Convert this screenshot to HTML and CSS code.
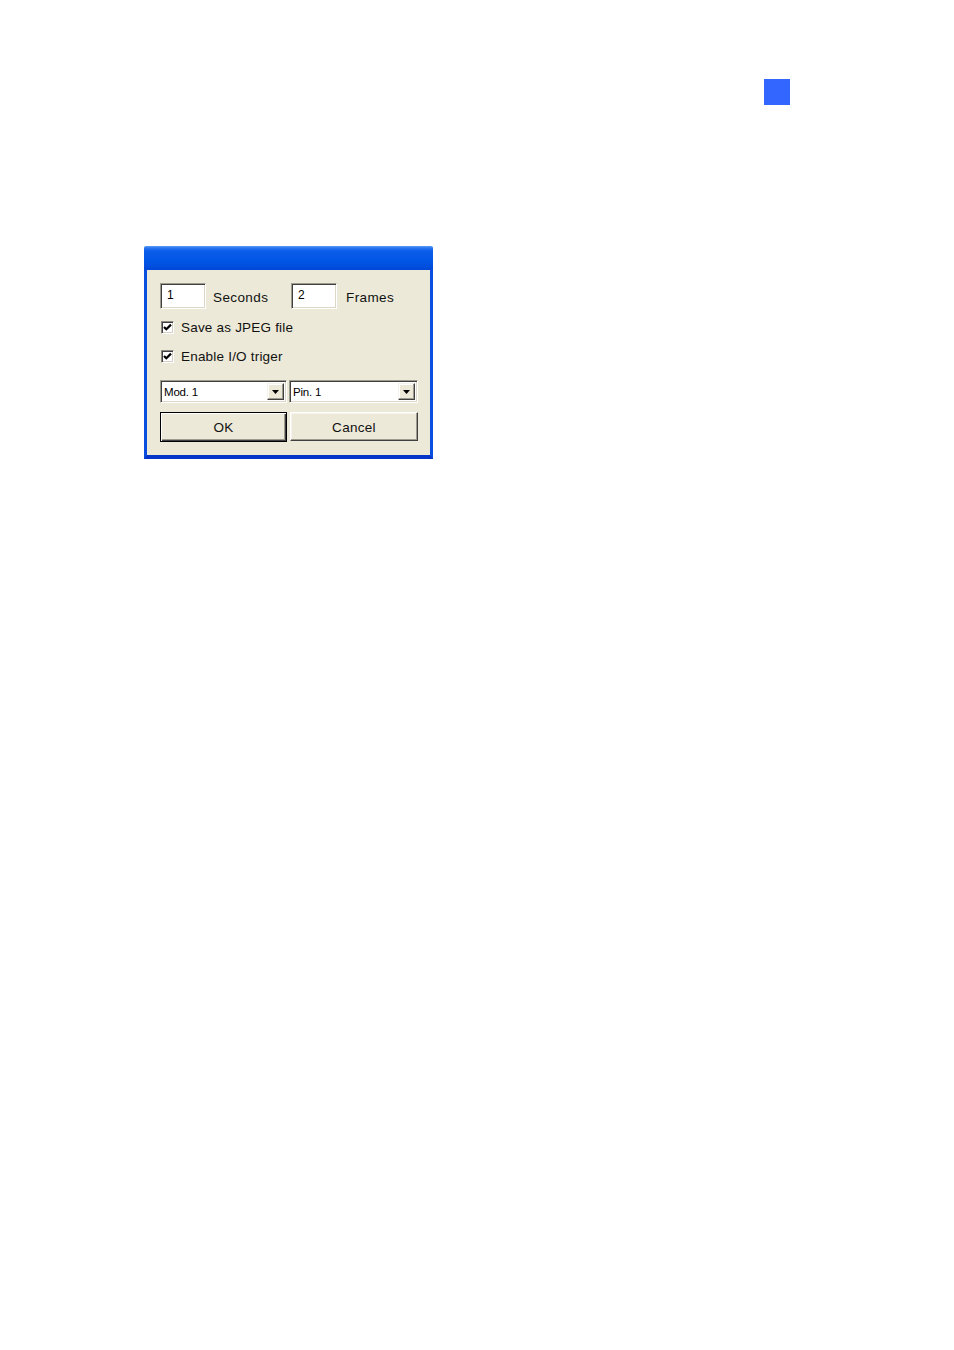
FILE: index.html
```html
<!DOCTYPE html>
<html>
<head>
<meta charset="utf-8">
<link rel="stylesheet" href="styles.css">
</head>
<body>
<div class="page">
  <div class="marker-row"><div class="marker"></div></div>
  <div class="dialog">
    <div class="titlebar"></div>
    <div class="dlg-body">
      <div class="row-inputs">
        <div class="field">1</div>
        <span class="lbl lbl-sec">Seconds</span>
        <div class="field">2</div>
        <span class="lbl lbl-frm">Frames</span>
      </div>
      <div class="check-row first">
        <span class="checkbox"><svg width="9" height="9" viewBox="0 0 9 9"><polyline points="1,4 3.3,6.3 8,1.6" fill="none" stroke="#000" stroke-width="2.2"/></svg></span>
        <span class="check-lbl">Save as JPEG file</span>
      </div>
      <div class="check-row second">
        <span class="checkbox"><svg width="9" height="9" viewBox="0 0 9 9"><polyline points="1,4 3.3,6.3 8,1.6" fill="none" stroke="#000" stroke-width="2.2"/></svg></span>
        <span class="check-lbl">Enable I/O triger</span>
      </div>
      <div class="combo-row">
        <div class="combo">
          <span class="combo-text">Mod. 1</span>
          <span class="combo-btn"><svg width="7" height="4" viewBox="0 0 7 4"><path d="M0 0 H7 L3.5 4 Z" fill="#000"/></svg></span>
        </div>
        <div class="combo combo-2">
          <span class="combo-text">Pin. 1</span>
          <span class="combo-btn"><svg width="7" height="4" viewBox="0 0 7 4"><path d="M0 0 H7 L3.5 4 Z" fill="#000"/></svg></span>
        </div>
      </div>
      <div class="btn-row">
        <div class="btn btn-default"><span>OK</span></div>
        <div class="btn btn-cancel"><span>Cancel</span></div>
      </div>
    </div>
  </div>
</div>
</body>
</html>
```
FILE: styles.css
```css
html, body {
  margin: 0;
  padding: 0;
  background: #fff;
}
body {
  font-family: "Liberation Sans", Arial, sans-serif;
  color: #000;
}
.page {
  width: 954px;
  height: 1350px;
  padding-top: 79px;
  box-sizing: border-box;
}
.marker-row {
  display: flex;
  padding-left: 764px;
}
.marker {
  width: 26px;
  height: 26px;
  background: #3366ff;
}
.dialog {
  margin-top: 141px;
  margin-left: 144px;
  width: 289px;
  display: flex;
  flex-direction: column;
}
.titlebar {
  height: 24px;
  background: linear-gradient(to bottom, #5a9cf6 0, #2b74ef 2px, #0a5de8 5px, #0357e6 14px, #004fdf 20px, #0047d6 24px);
  border-radius: 2px 2px 0 0;
}
.dlg-body {
  height: 189px;
  box-sizing: border-box;
  background: #ece9d8;
  border-left: 3px solid #0a4ee0;
  border-right: 3px solid #0a4ee0;
  border-bottom: 4px solid #0636c8;
  padding: 13px 12px 13px 13px;
  display: flex;
  flex-direction: column;
}
.row-inputs {
  display: flex;
  align-items: center;
  height: 26px;
}
.field {
  width: 46px;
  height: 26px;
  box-sizing: border-box;
  background: #fff;
  border-top: 1px solid #9d9a8e;
  border-left: 1px solid #9d9a8e;
  border-right: 1px solid #fff;
  border-bottom: 1px solid #fff;
  box-shadow: inset 1px 1px 0 #404040, inset -1px -1px 0 #dcd8c8;
  font-size: 12px;
  line-height: 14px;
  padding: 4px 0 0 6px;
}
.lbl {
  font-size: 13.5px;
  letter-spacing: 0.4px;
  color: #111;
}
.lbl-sec {
  width: 85px;
  box-sizing: border-box;
  padding-left: 7px;
  padding-top: 2px;
}
.lbl-frm {
  padding-left: 9px;
  padding-top: 2px;
}
.check-row {
  display: flex;
  align-items: center;
  height: 13px;
}
.check-row.first { margin-top: 12px; }
.check-row.second { margin-top: 16px; }
.checkbox {
  width: 13px;
  height: 13px;
  margin-left: 1px;
  box-sizing: border-box;
  background: #fff;
  border-top: 1px solid #8c8a80;
  border-left: 1px solid #8c8a80;
  border-right: 1px solid #fff;
  border-bottom: 1px solid #fff;
  box-shadow: inset 1px 1px 0 #404040, inset -1px -1px 0 #d4d0c8;
  display: flex;
  align-items: center;
  justify-content: center;
}
.checkbox svg { display: block; }
.check-lbl {
  font-size: 13.5px;
  letter-spacing: 0.2px;
  margin-left: 7px;
  color: #111;
}
.combo-row {
  display: flex;
  margin-top: 17px;
  height: 23px;
  gap: 2px;
}
.combo {
  width: 127px;
  height: 23px;
  box-sizing: border-box;
  background: #fff;
  border-top: 1px solid #9d9a8e;
  border-left: 1px solid #9d9a8e;
  border-right: 1px solid #fff;
  border-bottom: 1px solid #fff;
  box-shadow: inset 1px 1px 0 #404040, inset -1px -1px 0 #dcd8c8;
  display: flex;
  align-items: stretch;
  padding: 2px;
}
.combo-2 { width: 129px; }
.combo-text {
  flex: 1;
  font-size: 11.5px;
  line-height: 19px;
  padding-left: 1px;
  letter-spacing: -0.2px;
}
.combo-btn {
  width: 17px;
  box-sizing: border-box;
  background: #ece9d8;
  border-top: 1px solid #f4f2ea;
  border-left: 1px solid #f4f2ea;
  border-right: 1px solid #404040;
  border-bottom: 1px solid #404040;
  box-shadow: inset -1px -1px 0 #9d9a8e, inset 1px 1px 0 #fff;
  display: flex;
  align-items: center;
  justify-content: center;
}
.combo-btn svg { display: block; margin-top: 1px; }
.btn-row {
  display: flex;
  margin-top: 9px;
  gap: 3px;
}
.btn {
  height: 30px;
  box-sizing: border-box;
  background: #ece9d8;
  display: flex;
  align-items: center;
  justify-content: center;
  font-size: 13.5px;
  letter-spacing: 0.3px;
  color: #111;
}
.btn-default {
  width: 127px;
  border: 1px solid #000;
  box-shadow: inset 1px 1px 0 #fff, inset -1px -1px 0 #404040, inset -2px -2px 0 #9d9a8e;
}
.btn-cancel {
  width: 128px;
  height: 29px;
  border-top: 1px solid #fff;
  border-left: 1px solid #fff;
  border-right: 1px solid #404040;
  border-bottom: 1px solid #404040;
  box-shadow: inset -1px -1px 0 #9d9a8e, inset 1px 1px 0 #f6f4ec;
}
.btn span { display: block; padding-top: 1px; }
```
